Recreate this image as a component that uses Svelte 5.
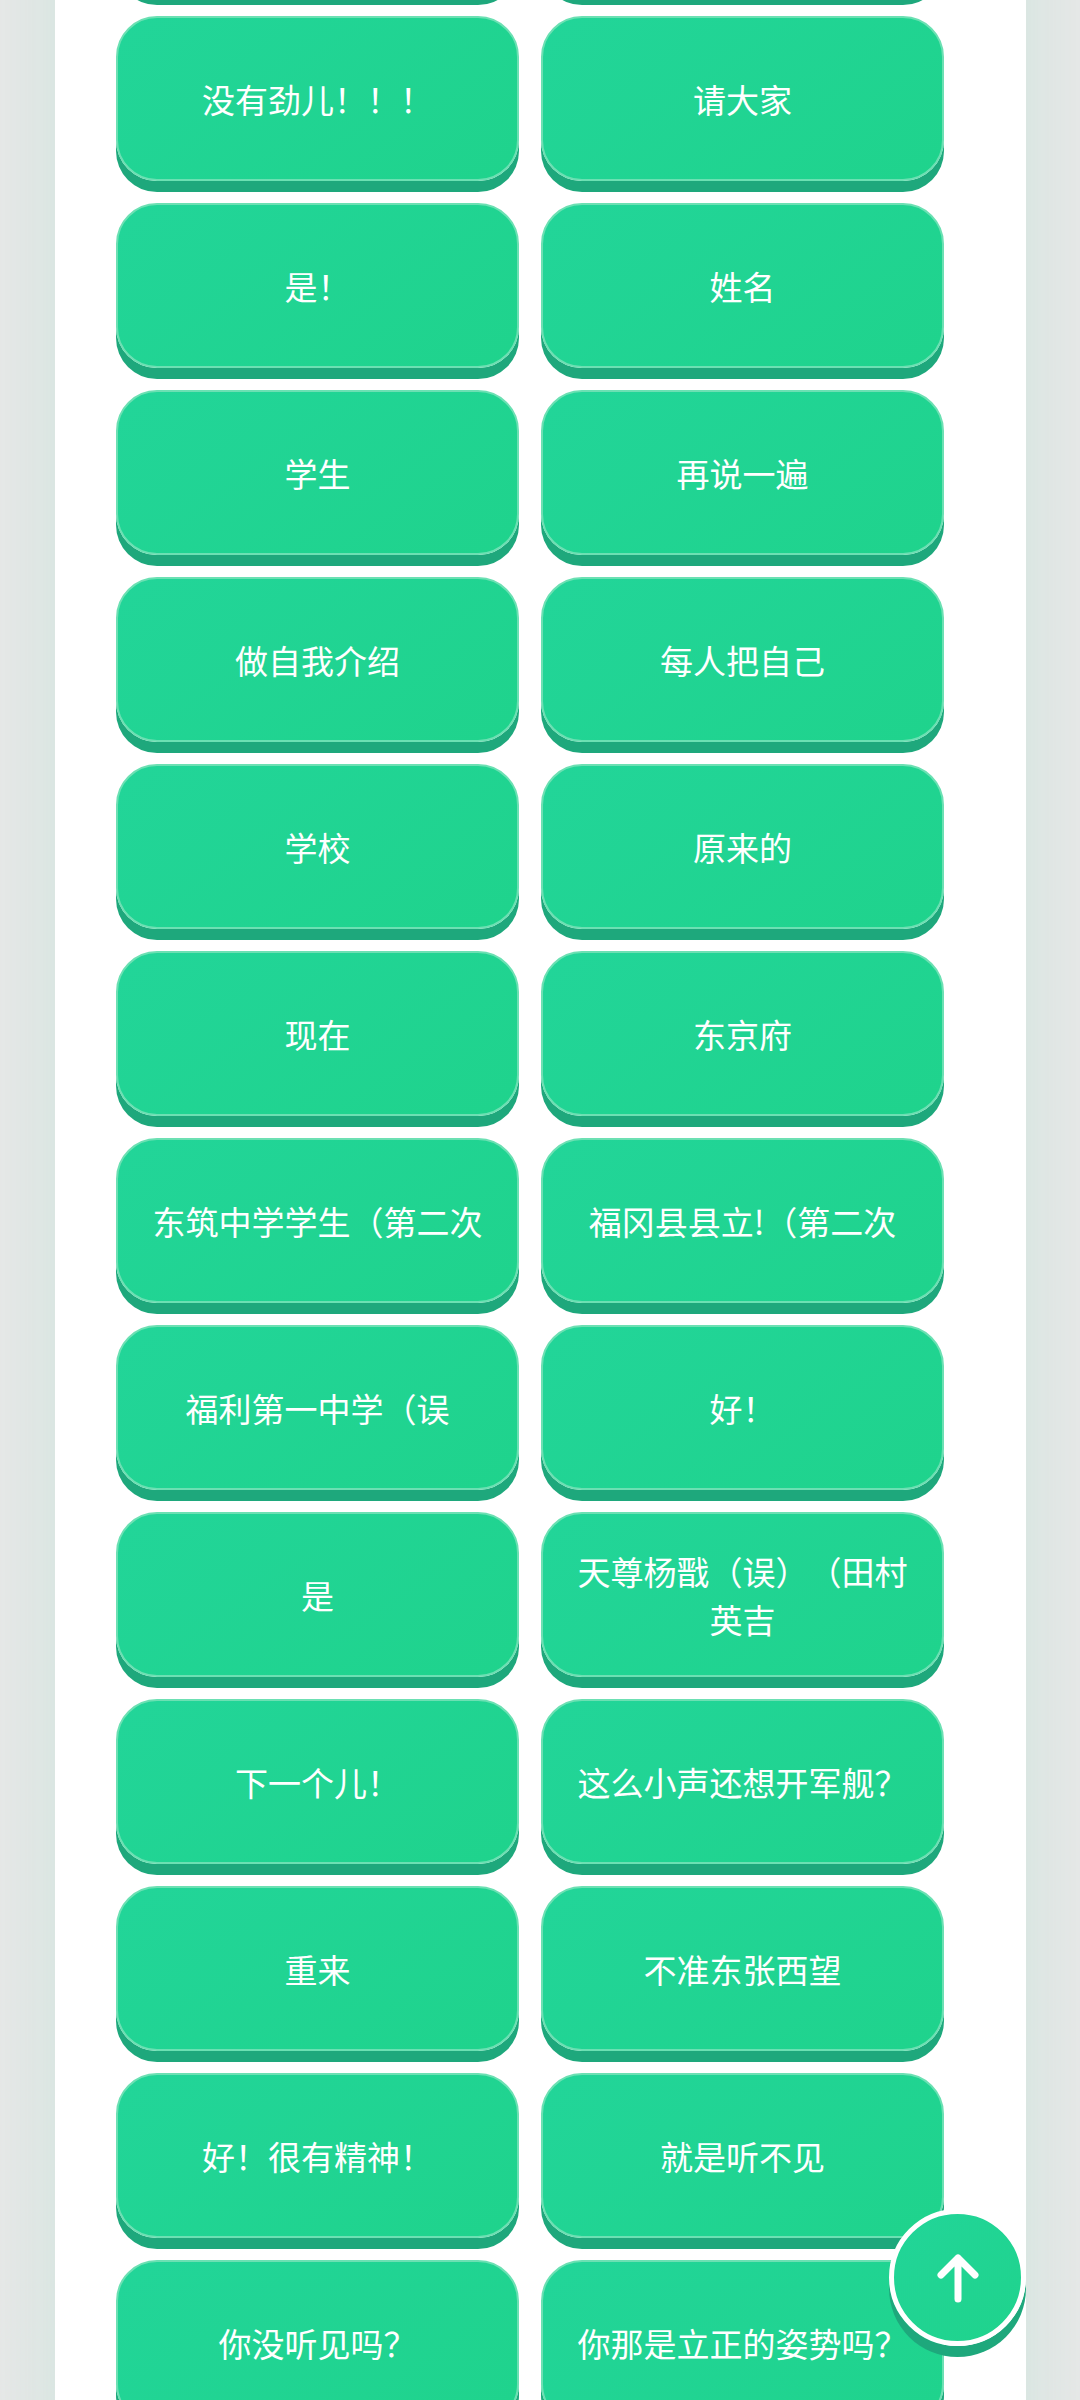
<script lang="ts">
  const phrases: string[] = [
    '没有劲儿！！！', '请大家',
    '是！', '姓名',
    '学生', '再说一遍',
    '做自我介绍', '每人把自己',
    '学校', '原来的',
    '现在', '东京府',
    '东筑中学学生（第二次', '福冈县县立!（第二次',
    '福利第一中学（误', '好！',
    '是', '天尊杨戬（误）（田村英吉',
    '下一个儿！', '这么小声还想开军舰？',
    '重来', '不准东张西望',
    '好！很有精神！', '就是听不见',
    '你没听见吗？', '你那是立正的姿势吗？'
  ];

  let page: HTMLDivElement;

  function toTop() {
    page.scrollTo({ top: 0, behavior: 'smooth' });
  }
</script>

<div class="page" bind:this={page}>
  <main class="panel">
    <div class="grid">
      <!-- row that is already scrolled past -->
      <span class="key" aria-hidden="true"></span>
      <span class="key" aria-hidden="true"></span>
      {#each phrases as phrase}
        <button class="key" type="button">{phrase}</button>
      {/each}
    </div>
  </main>

  <button class="to-top" type="button" aria-label="返回顶部" on:click={toTop}>
    <svg viewBox="0 0 48 54" width="48" height="54" aria-hidden="true">
      <path d="M24 48V7M7 24L24 7L41 24" />
    </svg>
  </button>
</div>

<style>
  :global(body) {
    margin: 0;
    background: #e8e8e8;
  }

  .page {
    height: 100vh;
    overflow: hidden;
    font-family: 'Noto Sans CJK SC', sans-serif;
    text-spacing-trim: space-all;
  }

  .panel {
    margin: -171px 54px 0 55px;
    padding: 0 82px 82px 61px;
    background: #fff;
    box-shadow: 0 0 82px rgba(32, 212, 148, 0.13);
  }

  .grid {
    display: grid;
    grid-template-columns: 1fr 1fr;
    grid-auto-rows: minmax(165px, auto);
    gap: 22px;
  }

  .key {
    display: flex;
    align-items: center;
    justify-content: center;
    box-sizing: border-box;
    margin: 0;
    padding: 22px 32px;
    border: 2px solid #6ce0b3;
    border-radius: 41px;
    background: linear-gradient(145deg, #22d599, #1fd38c);
    background-origin: border-box;
    box-shadow: 0 11px 0 #1ea87c;
    color: #fff;
    font-family: inherit;
    font-size: 33px;
    font-weight: 400;
    line-height: 48px;
    text-align: center;
    cursor: pointer;
  }

  .key:active {
    transform: translateY(5px);
    box-shadow: 0 6px 0 #1ea87c;
  }

  .to-top {
    position: fixed;
    right: 54px;
    bottom: 54px;
    display: flex;
    align-items: center;
    justify-content: center;
    box-sizing: border-box;
    width: 137px;
    height: 137px;
    padding: 0;
    border: 5px solid #fff;
    border-radius: 50%;
    background: linear-gradient(145deg, #22d599, #1fd38c);
    background-origin: border-box;
    box-shadow: 0 11px 0 #1ea87c;
    cursor: pointer;
  }

  .to-top path {
    fill: none;
    stroke: #fff;
    stroke-width: 7;
    stroke-linecap: round;
    stroke-linejoin: round;
  }
</style>
